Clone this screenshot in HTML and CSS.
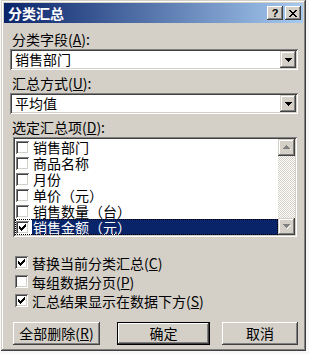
FILE: index.html
```html
<!DOCTYPE html>
<html lang="zh-CN">
<head>
<meta charset="utf-8">
<title>分类汇总</title>
<link rel="stylesheet" href="styles.css">
</head>
<body>
<div class="dialog">
  <div class="titlebar">
    <span class="title">分类汇总</span>
    <div class="tb-buttons">
      <span class="tb-btn help">?</span>
      <span class="tb-btn close">
        <svg width="8" height="7" viewBox="0 0 8 7" shape-rendering="crispEdges"><path d="M0 0h2v1h-2zM6 0h2v1h-2zM1 1h2v1h-2zM5 1h2v1h-2zM2 2h4v1h-4zM3 3h2v1h-2zM2 4h4v1h-4zM1 5h2v1h-2zM5 5h2v1h-2zM0 6h2v1h-2zM6 6h2v1h-2z" fill="#000"/></svg>
      </span>
    </div>
  </div>
  <div class="content">
    <div class="label">分类字段(<u>A</u>):</div>
    <div class="combo">
      <span class="combo-text">销售部门</span>
      <span class="drop"><svg width="7" height="4" viewBox="0 0 7 4" shape-rendering="crispEdges"><path d="M0 0h7v1h-7zM1 1h5v1h-5zM2 2h3v1h-3zM3 3h1v1h-1z" fill="#000"/></svg></span>
    </div>
    <div class="label">汇总方式(<u>U</u>):</div>
    <div class="combo">
      <span class="combo-text">平均值</span>
      <span class="drop"><svg width="7" height="4" viewBox="0 0 7 4" shape-rendering="crispEdges"><path d="M0 0h7v1h-7zM1 1h5v1h-5zM2 2h3v1h-3zM3 3h1v1h-1z" fill="#000"/></svg></span>
    </div>
    <div class="label">选定汇总项(<u>D</u>):</div>
    <div class="listbox">
      <div class="items">
        <div class="item"><span class="cb"></span><span class="txt">销售部门</span></div>
        <div class="item"><span class="cb"></span><span class="txt">商品名称</span></div>
        <div class="item"><span class="cb"></span><span class="txt">月份</span></div>
        <div class="item"><span class="cb"></span><span class="txt">单价（元）</span></div>
        <div class="item"><span class="cb"></span><span class="txt">销售数量（台）</span></div>
        <div class="item selected"><span class="cb"><svg class="tick" width="7" height="7" viewBox="0 0 7 7" shape-rendering="crispEdges"><path d="M6 0h1v3h-1zM5 1h1v3h-1zM4 2h1v3h-1zM3 3h1v3h-1zM2 4h1v3h-1zM1 3h1v3h-1zM0 2h1v3h-1z" fill="#000"/></svg></span><span class="txt">销售金额（元）</span></div>
      </div>
      <div class="scrollbar">
        <span class="sb-btn"><svg width="8" height="5" viewBox="0 0 8 5" shape-rendering="crispEdges"><path d="M4 1h1v1h1v1h1v1h1v1h-1v-1h-1v-1h-1v-1h-1z" fill="#fff"/><path d="M3 0h1v1h1v1h1v1h1v1h-7v-1h1v-1h1v-1h1z" fill="#808080"/></svg></span>
        <span class="track"></span>
        <span class="sb-btn"><svg width="8" height="5" viewBox="0 0 8 5" shape-rendering="crispEdges"><path d="M1 1h7v1h-1v1h-1v1h-1v1h-1v-1h1v-1h1v-1h1v-1z" fill="#fff"/><path d="M0 0h7v1h-1v1h-1v1h-1v1h-1v-1h-1v-1h-1v-1h-1z" fill="#808080"/></svg></span>
      </div>
    </div>
    <div class="checks">
      <div class="check"><span class="cb"><svg class="tick" width="7" height="7" viewBox="0 0 7 7" shape-rendering="crispEdges"><path d="M6 0h1v3h-1zM5 1h1v3h-1zM4 2h1v3h-1zM3 3h1v3h-1zM2 4h1v3h-1zM1 3h1v3h-1zM0 2h1v3h-1z" fill="#000"/></svg></span><span>替换当前分类汇总(<u>C</u>)</span></div>
      <div class="check"><span class="cb"></span><span>每组数据分页(<u>P</u>)</span></div>
      <div class="check"><span class="cb"><svg class="tick" width="7" height="7" viewBox="0 0 7 7" shape-rendering="crispEdges"><path d="M6 0h1v3h-1zM5 1h1v3h-1zM4 2h1v3h-1zM3 3h1v3h-1zM2 4h1v3h-1zM1 3h1v3h-1zM0 2h1v3h-1z" fill="#000"/></svg></span><span>汇总结果显示在数据下方(<u>S</u>)</span></div>
    </div>
    <div class="buttons">
      <button class="btn btn-remove">全部删除(<u>R</u>)</button>
      <button class="btn btn-ok default">确定</button>
      <button class="btn btn-cancel">取消</button>
    </div>
  </div>
</div>
</body>
</html>
```
FILE: styles.css
```css
* { box-sizing: border-box; }
html, body { margin: 0; padding: 0; }
body {
  background: #f7f7f7;
  font-family: "Noto Sans CJK SC", "DejaVu Sans", sans-serif;
  font-size: 14px;
  color: #000;
}
u { text-decoration: underline; text-underline-offset: 1px; }

.dialog {
  margin-left: 1px;
  width: 305px;
  height: 351px;
  padding: 3px;
  background: #d4d0c8;
  box-shadow: inset -1px -1px #404040, inset 1px 1px #d4d0c8,
              inset -2px -2px #808080, inset 2px 2px #fff;
  display: flex;
  flex-direction: column;
}

.titlebar {
  height: 20px;
  display: flex;
  align-items: center;
  justify-content: space-between;
  padding: 0 2px 0 4px;
  background: linear-gradient(to right, #0a246a, #a6caf0);
}
.title {
  color: #fff;
  font-weight: bold;
  font-size: 14px;
  line-height: 20px;
}
.tb-buttons { display: flex; gap: 2px; }
.tb-btn {
  width: 16px;
  height: 14px;
  background: #d4d0c8;
  box-shadow: inset -1px -1px #404040, inset 1px 1px #fff,
              inset -2px -2px #808080, inset 2px 2px #d4d0c8;
  display: flex;
  align-items: center;
  justify-content: center;
}
.help {
  font-family: "Liberation Sans", sans-serif;
  font-weight: bold;
  font-size: 11px;
  line-height: 14px;
  padding-bottom: 1px;
}

.content {
  padding: 8px 5px 0 6px;
  display: flex;
  flex-direction: column;
}
.label {
  margin-left: 2px;
  height: 16px;
  line-height: 16px;
  margin-bottom: 2px;
}
.label + .combo { margin-bottom: 5px; }

.combo {
  height: 21px;
  padding: 2px;
  background: #fff;
  box-shadow: inset 1px 1px #808080, inset -1px -1px #fff,
              inset 2px 2px #404040, inset -2px -2px #d4d0c8;
  display: flex;
  align-items: center;
}
.combo-text {
  flex: 1;
  padding-left: 3px;
  line-height: 17px;
}
.drop {
  width: 16px;
  height: 17px;
  background: #d4d0c8;
  box-shadow: inset -1px -1px #404040, inset 1px 1px #d4d0c8,
              inset -2px -2px #808080, inset 2px 2px #fff;
  display: flex;
  align-items: center;
  justify-content: center;
}

.listbox {
  margin: 0 1px 0 3px;
  height: 100px;
  padding: 2px;
  background: #fff;
  box-shadow: inset 1px 1px #808080, inset -1px -1px #fff,
              inset 2px 2px #404040, inset -2px -2px #d4d0c8;
  display: flex;
}
.items { flex: 1; display: flex; flex-direction: column; }
.item {
  height: 16px;
  display: flex;
  align-items: center;
  padding-left: 1px;
}
.item .txt {
  margin-left: 3px;
  padding: 0 1px;
  line-height: 16px;
  white-space: nowrap;
}
.item.selected { outline: 1px dotted #000; outline-offset: -1px; }
.item.selected .txt {
  flex: 1;
  background: #0a246a;
  color: #fff;
}

.cb {
  width: 13px;
  height: 13px;
  flex: none;
  background: #fff;
  box-shadow: inset 1px 1px #808080, inset -1px -1px #fff,
              inset 2px 2px #404040, inset -2px -2px #d4d0c8;
  display: flex;
  align-items: center;
  justify-content: center;
}
.tick { display: block; }

.scrollbar {
  width: 17px;
  display: flex;
  flex-direction: column;
}
.sb-btn {
  height: 17px;
  background: #d4d0c8;
  box-shadow: inset -1px -1px #404040, inset 1px 1px #d4d0c8,
              inset -2px -2px #808080, inset 2px 2px #fff;
  display: flex;
  align-items: center;
  justify-content: center;
}
.track {
  flex: 1;
  background: repeating-conic-gradient(#fff 0 25%, #d4d0c8 0 50%) 0 0 / 2px 2px;
}

.checks {
  margin-top: 16px;
  display: flex;
  flex-direction: column;
}
.check {
  height: 19px;
  display: flex;
  align-items: center;
  padding-left: 5px;
  gap: 4px;
  white-space: nowrap;
}

.buttons {
  margin-top: 12px;
  padding-left: 3px;
  display: flex;
}
.btn {
  height: 23px;
  padding: 0;
  border: none;
  font: inherit;
  color: #000;
  background: #d4d0c8;
  box-shadow: inset -1px -1px #404040, inset 1px 1px #fff,
              inset -2px -2px #808080, inset 2px 2px #d4d0c8;
  line-height: 21px;
}
.btn-remove { width: 87px; }
.btn-ok { width: 93px; margin-left: 17px; }
.btn-cancel { width: 76px; margin-left: 12px; }
.btn.default {
  border: 1px solid #000;
  box-shadow: inset -1px -1px #404040, inset 1px 1px #fff,
              inset -2px -2px #808080, inset 2px 2px #d4d0c8;
}
```
